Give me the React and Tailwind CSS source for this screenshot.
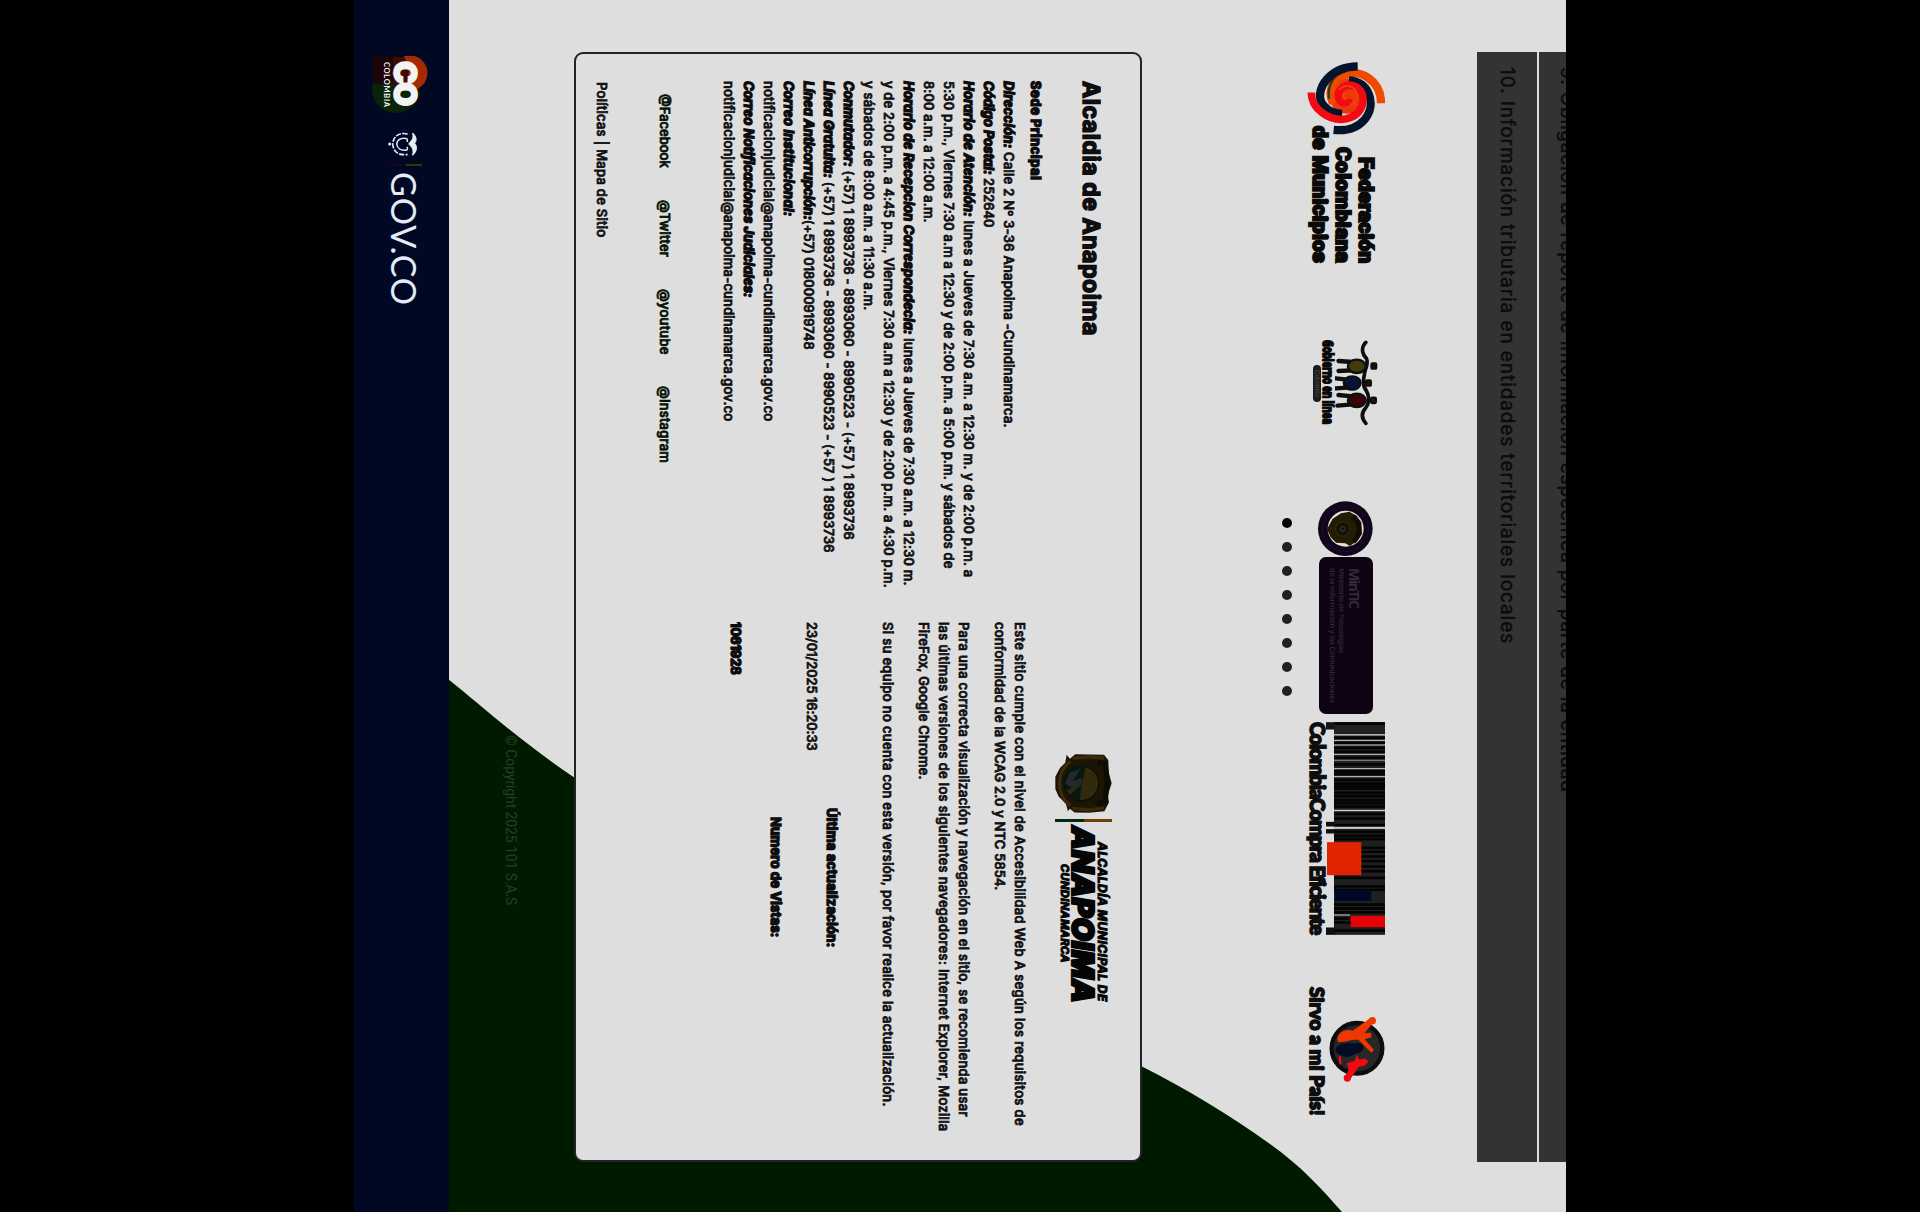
import React from "react";

function T({ className = "", children }) {
  return (
    <div className="flex">
      <span className={`whitespace-nowrap ${className}`}>{children}</span>
    </div>
  );
}

const B = ({ children }) => <b className="font-bold italic [-webkit-text-stroke:1.4px_#0c0c0f]">{children}</b>;

function Swirl() {
  return (
    <svg className="h-[78px] w-[73px]" viewBox="66 -316 219 237">
      <g transform="matrix(0 -1 1 0 0 0)" fill="none" strokeLinecap="butt">
        <circle cx="200" cy="168" r="54" fill="#ea3a0c" stroke="none" />
        <path d="M304 190 C304 120 240 84 190 104 C150 122 143 160 158 190" stroke="#f04a00" strokeWidth="25" />
        <path d="M196 94 C160 100 140 135 146 176" stroke="#2c3d14" strokeWidth="7" />
        <path d="M233 78 C150 78 103 145 123 188 C138 214 160 222 186 222" stroke="#04142a" strokeWidth="25" />
        <path d="M160 271 C245 280 290 215 266 160 C255 132 228 122 206 120" stroke="#04142a" strokeWidth="25" />
        <path d="M92 157 C92 210 150 245 195 238 C255 226 262 165 233 143 C200 122 165 150 176 176 C184 194 204 192 206 176" stroke="#f20a14" strokeWidth="23" />
        <path d="M196 158 C184 164 188 178 200 176" stroke="#f04a00" strokeWidth="6" />
        <path d="M176 150 C190 132 215 134 228 152 C236 170 228 190 212 196" stroke="#ee4a08" strokeWidth="4" />
      </g>
    </svg>
  );
}

function People() {
  return (
    <svg className="h-[43px] w-[86px]" viewBox="59 -266 258 128">
      <g transform="matrix(0 -1 1 0 0 0)" stroke="#0e0e0e" strokeLinecap="round" strokeLinejoin="round">
        <path d="M230 66 C212 85 222 105 232 115 C240 135 224 150 226 162 C220 185 222 200 232 212 C242 230 240 250 230 262 C215 278 218 295 230 309" fill="none" strokeWidth="11" />
        <path d="M190 125 L148 122 M190 150 L148 152 M175 178 L140 174 M175 202 L140 204 M190 228 L148 224 M190 252 L145 256" strokeWidth="13" />
        <ellipse cx="203" cy="138" rx="27" ry="20" fill="#443a08" strokeWidth="7" />
        <ellipse cx="189" cy="188" rx="25" ry="20" fill="#06123a" strokeWidth="7" />
        <ellipse cx="203" cy="240" rx="27" ry="20" fill="#380406" strokeWidth="7" />
        <rect x="247" y="129" width="14" height="16" rx="3" fill="#16121c" strokeWidth="7" />
        <rect x="231" y="180" width="14" height="16" rx="3" fill="#2a1408" strokeWidth="7" />
        <rect x="246" y="232" width="14" height="16" rx="3" fill="#2c1a0a" strokeWidth="7" />
      </g>
    </svg>
  );
}

const darkBars = [67, 110, 126, 140, 152, 170, 190, 210, 218, 236, 247, 254, 262, 275, 285, 297, 306, 316, 338, 352, 372, 392, 404, 414, 440, 452, 466, 480, 496, 510, 530, 556, 566, 610, 622, 634, 652, 664, 688];
const lightBars = [[103, 4], [120, 3], [134, 3], [162, 3], [180, 2], [205, 3], [229, 3], [330, 4], [381, 6]];

function Barcode() {
  return (
    <svg className="h-[59px] w-[213px]" viewBox="67 -345 638 177">
      <g transform="matrix(0 -1 1 0 0 0)">
        <rect x="192" y="67" width="153" height="638" fill="#202020" />
        {darkBars.map((y) => <rect key={y} x="192" y={y} width="153" height="8" fill="#040404" />)}
        {lightBars.map(([y, h]) => <rect key={y} x="192" y={y} width="153" height={h} fill="#cfcfcf" />)}
        <rect x="168" y="67" width="26" height="22" fill="#151515" />
        <rect x="168" y="366" width="26" height="14" fill="#101010" />
        <rect x="168" y="388" width="26" height="13" fill="#101010" />
        <rect x="168" y="683" width="26" height="22" fill="#101010" />
        <rect x="192" y="643" width="48" height="5" fill="#8a8a8a" />
        <rect x="171" y="427" width="103" height="99" fill="#e02400" />
        <rect x="195" y="570" width="109" height="33" fill="#000828" />
        <rect x="242" y="648" width="103" height="34" fill="#e60008" />
      </g>
    </svg>
  );
}

function ServeBadge() {
  return (
    <svg className="h-[56px] w-[66px]" viewBox="948 -347 198 168">
      <g transform="matrix(0 -1 1 0 0 0)" strokeLinecap="round">
        <circle cx="263" cy="1045" r="76" fill="#272727" stroke="#0b0c0e" strokeWidth="13" />
        <path d="M198 1050 C205 1025 235 1030 270 1030 C295 1040 280 1060 255 1062 C235 1078 205 1070 198 1050Z" fill="#000c24" />
        <path d="M205 1025 C200 1000 225 985 250 992 L302 955 L316 963 L285 1000 L305 998 L306 1012 L286 1018 L314 1050 L306 1058 L268 1020 C245 1015 225 1030 205 1025Z" fill="#ee3800" />
        <circle cx="309" cy="962" r="11" fill="#ee3800" />
        <path d="M232 1090 L256 1082 L262 1064 L270 1078 L290 1076 L297 1086 L284 1098 L268 1100 L240 1142 L226 1138 L238 1108Z" fill="#ee0a10" />
        <circle cx="234" cy="1134" r="11" fill="#ee0a10" />
        <path d="M211 1070 L213 1090" stroke="#ee0a10" strokeWidth="7" />
      </g>
    </svg>
  );
}

function MinTicSeal() {
  return (
    <svg className="h-[56px] w-[56px]" viewBox="61 -311 168 168">
      <g transform="matrix(0 -1 1 0 0 0)">
        <circle cx="228" cy="144" r="82" fill="#10051a" />
        <circle cx="228" cy="144" r="69" fill="none" stroke="#1d0c2b" strokeWidth="3" />
        <circle cx="229" cy="144" r="54" fill="#e4dfd6" />
        <path d="M173 145 L190 114 L215 98 L240 93 L262 105 L276 125 L278 160 L266 178 L242 196 L228 188 L200 186 L184 170Z" fill="#241a05" />
        <path d="M250 108 C275 125 275 165 252 184" fill="none" stroke="#0e0a06" strokeWidth="14" />
        <circle cx="220" cy="145" r="22" fill="#141308" stroke="#2c240c" strokeWidth="5" />
        <circle cx="220" cy="145" r="7" fill="none" stroke="#33301c" strokeWidth="4" />
      </g>
    </svg>
  );
}

function TownCrest() {
  return (
    <svg className="h-[57px] w-[60px]" viewBox="37 -219 180 172">
      <g transform="matrix(0 -1 1 0 0 0)">
        <path d="M108 40 L195 42 L208 58 L206 85 L218 128 L206 165 L210 185 L196 212 L150 217 L106 216 L92 205 L86 212 L80 190 L58 168 L48 145 L48 108 L62 82 L78 66 L82 42 L92 54Z" fill="#1d1504" />
        <path d="M100 52 L150 48 L195 52 M100 204 L150 208 L195 202" fill="none" stroke="#3a2a08" strokeWidth="10" />
        <path d="M94 62 C50 90 50 165 94 195" fill="none" stroke="#3e2d08" strokeWidth="9" />
        <path d="M175 66 L200 70 L204 125 L198 185 L175 192" fill="none" stroke="#0e0c06" strokeWidth="16" />
        <circle cx="127" cy="128" r="52" fill="#33290c" stroke="#0d0c0a" strokeWidth="4" />
        <path d="M127 76 A52 52 0 0 0 80 150 L128 130 L140 78Z" fill="#031a12" />
        <path d="M92 95 L125 84 L100 122 L128 112 L128 146 L96 140 L78 128Z" fill="#24282c" />
        <path d="M90 165 L128 130 L122 178Z" fill="#031a12" />
      </g>
    </svg>
  );
}

function CoLogo() {
  return (
    <div className="relative h-[57px] w-[57px]">
      <svg className="absolute inset-0 h-full w-full" viewBox="0 0 57 57">
        <circle cx="33" cy="32" r="24" fill="#0a2206" />
        <path d="M0 28 H28 V55 H0Z" fill="#1c0408" />
        <circle cx="17" cy="18" r="17.5" fill="#a32a02" />
        <path d="M1 24 A26 26 0 0 1 31 24 L31 35 H1Z" fill="#3a0d04" />
      </svg>
      <div className="relative pl-[5px] pt-[5px] text-[#f2f2f2]">
        <T className="font-['Inter'] text-[31px] font-black leading-[36px] tracking-[-2px] [-webkit-text-stroke:1.6px_#f2f2f2]">CO</T>
        <T className="-mt-[4px] pl-px font-['Lato'] text-[7.5px] font-bold leading-[10px] tracking-[0.7px]">COLOMBIA</T>
      </div>
    </div>
  );
}

function GovCrest() {
  return (
    <svg className="h-[31px] w-[24px]" viewBox="302 -206 72 93">
      <g transform="matrix(0 -1 1 0 0 0)" fill="none" stroke="#e0eaf6" strokeWidth="5">
        <path d="M190 305 C202 316 203 328 196 336 C204 344 204 360 190 372 C193 358 190 350 184 344 L178 338 L184 330 C190 325 193 318 190 305Z" fill="#e6eef8" stroke="#e6eef8" strokeWidth="3" />
        <path d="M175 308 C148 302 132 315 130 338 C132 362 148 374 175 369" strokeDasharray="16 4" />
        <path d="M174 322 C152 318 144 328 142 338 C144 350 152 360 174 356 M174 322 V332 M174 356 V346" strokeWidth="4.5" />
        <circle cx="121" cy="338" r="4.5" fill="#e6eef8" stroke="none" />
      </g>
    </svg>
  );
}

const body = "font-['Inter'] text-[13px] font-medium leading-[20px] text-[#111113] [-webkit-text-stroke:0.8px_#111113]";
const heavy = "font-bold [-webkit-text-stroke:1.4px_#0c0c0f]";
const tab = "font-['Inter'] text-[19px] leading-[26px] text-[#0b0b0b] [-webkit-text-stroke:0.5px_#0b0b0b]";

export default function App() {
  return (
    <div className="flex h-[1212px] w-[1920px] justify-center overflow-hidden bg-black">
      <div className="relative flex h-[1212px] w-[1212px] shrink-0 rotate-90 flex-col overflow-hidden bg-[#dedede]">
        <svg className="absolute inset-0 h-[1212px] w-[1212px]" viewBox="0 0 1212 1212">
          <path d="M679 1118 C706 1084 742 1045 778 991 L1066 425 C1088 381 1115 336 1144 296 C1166 265 1189 244 1212 224 V1118Z" fill="#001a00" />
        </svg>

        <div className="relative ml-[52px] w-[1110px]">
          <div className="flex h-[27px] items-start overflow-hidden bg-[#333333] pl-[15px]">
            <div className="-mt-[14px]"><T className={`tracking-[0.84px] ${tab}`}>9. Obligación de reporte de información específica por parte de la entidad</T></div>
          </div>
          <div className="mt-[2px] flex h-[60px] items-center bg-[#333333] pl-[15px]">
            <T className={`tracking-[0.92px] ${tab}`}>10. Información tributaria en entidades territoriales locales</T>
          </div>
        </div>

        <div className="relative mt-[92px] flex h-[84px] items-start pl-[62px]">
          <div className="flex w-[278px]">
            <Swirl />
            <div className="-ml-[9px] pt-[8px] font-['Roboto'] text-[21px] font-black leading-[23px] text-[#0a0a0a] [-webkit-text-stroke:2px_#0a0a0a]">
              <div className="pl-[31px]"><T className="tracking-[0.1px]">Federación</T></div>
              <div className="pl-[21px]"><T className="tracking-[0.3px]">Colombiana</T></div>
              <T className="tracking-[0.3px]">de Municipios</T>
            </div>
          </div>
          <div className="w-[161px] pt-[7px]">
            <People />
            <div className="-mt-[2px] w-[86px]"><T className="inline-block origin-left scale-x-[0.635] font-['Open_Sans'] text-[15px] font-bold leading-[16px] text-[#0a0a0a] [-webkit-text-stroke:2px_#0a0a0a]">Gobierno en línea</T></div>
            <div className="ml-[25px] h-[8px] w-[37px] rounded-sm bg-[#1b1b1b] text-center font-['Inter'] text-[6px] leading-[8px] text-[#4a4a4a]">Colombia</div>
          </div>
          <div className="flex w-[221px] pt-[12px]">
            <MinTicSeal />
            <div className="h-[54px] w-[157px] rounded-[7px] bg-[#0e0312] pl-[11px] pt-[11px] font-['Open_Sans'] text-[#33283a]">
              <T className="text-[14px] font-bold leading-[16px] tracking-[-1.5px]">MinTIC</T>
              <T className="text-[7.5px] font-semibold leading-[9px] tracking-[-0.28px]">Ministerio de Tecnologías</T>
              <T className="text-[7.5px] font-semibold leading-[9px] tracking-[-0.21px]">de la Información y las Comunicaciones</T>
            </div>
          </div>
          <div className="w-[265px]">
            <Barcode />
            <div className="-mt-[4px]"><T className="font-['Lato'] text-[20px] font-black leading-[24px] tracking-[-1.1px] text-[#0e0e0e] [-webkit-text-stroke:1.6px_#0e0e0e]">ColombiaCompra Eficiente</T></div>
          </div>
          <div className="w-[140px]">
            <div className="pl-[29px]"><ServeBadge /></div>
            <T className="font-['Lato'] text-[19px] font-bold leading-[24px] tracking-[0.1px] text-[#0e0e0e] [-webkit-text-stroke:1.9px_#0e0e0e]">Sirvo a mi País!</T>
          </div>
        </div>

        <div className="relative mt-[9px] flex h-[10px] gap-[14px] pl-[518px]">
          <i className="size-[10px] rounded-full bg-[#050505]" />
          {[1, 2, 3, 4, 5, 6, 7].map((i) => <i key={i} className="size-[10px] rounded-full bg-[#202020]" />)}
        </div>

        <div className="relative ml-[52px] mt-[140px] flex h-[568px] w-[1110px] rounded-[9px] border-2 border-[#222326] bg-[#dedede]">
          <div className={`w-[568px] shrink-0 pl-[27px] pt-[35px] ${body}`}>
            <T className="text-[23px] font-bold leading-[28px] tracking-[0.55px] [-webkit-text-stroke:1.5px_#0c0c0f]">Alcaldia de Anapoima</T>
            <div className="mt-[31px]"><T className={`tracking-[0.57px] ${heavy}`}>Sede Principal</T></div>
            <div className="mt-[7px]">
              <T className="tracking-[0.26px]"><B>Dirección:</B> Calle 2 Nº 3-36 Anapoima -Cundinamarca.</T>
              <T className="tracking-[0.05px]"><B>Código Postal:</B> 252640</T>
              <T className="tracking-[0.24px]"><B>Horario de Atención:</B> lunes a Jueves de 7:30 a.m. a 12:30 m. y de 2:00 p.m. a</T>
              <T className="tracking-[0.19px]">5:30 p.m., Viernes 7:30 a.m a 12:30 y de 2:00 p.m. a 5:00 p.m. y sábados de</T>
              <T className="tracking-[0.18px]">8:00 a.m. a 12:00 a.m.</T>
              <T className="tracking-[0.2px]"><B>Horario de Recepcion Correspondecia:</B> lunes a Jueves de 7:30 a.m. a 12:30 m.</T>
              <T className="tracking-[0.19px]">y de 2:00 p.m. a 4:45 p.m., Viernes 7:30 a.m a 12:30 y de 2:00 p.m. a 4:30 p.m.</T>
              <T className="tracking-[0.23px]">y sábados de 8:00 a.m. a 11:30 a.m.</T>
              <T className="tracking-[0.14px]"><B>Conmutador:</B> (+57) 1 8993736 - 8993060 - 8990523 - (+57 ) 1 8993736</T>
              <T className="tracking-[0.17px]"><B>Línea Gratuita:</B> (+57) 1 8993736 - 8993060 - 8990523 - (+57 ) 1 8993736</T>
              <T className="tracking-[0.03px]"><B>Línea Anticorrupción:</B>(+57) 018000919748</T>
              <T className="tracking-[0.24px]"><B>Correo Institucional:</B></T>
              <T className="tracking-[0.2px]">notificacionjudicial@anapoima-cundinamarca.gov.co</T>
              <T className="tracking-[0.12px]"><B>Correo Notificaciones Judiciales:</B></T>
              <T className="tracking-[0.2px]">notificacionjudicial@anapoima-cundinamarca.gov.co</T>
            </div>
            <div className="mt-[44px] flex pl-[13px] text-[#041204] [-webkit-text-stroke:0.8px_#041204]">
              <div className="w-[106px]"><T>@Facebook</T></div>
              <div className="w-[89px]"><T className="tracking-[0.25px]">@Twitter</T></div>
              <div className="w-[97px]"><T className="tracking-[0.25px]">@youtube</T></div>
              <T className="tracking-[0.2px]">@Instagram</T>
            </div>
            <div className="mt-[43px] pl-px"><T className="tracking-[0.28px]">Políticas | Mapa de Sitio</T></div>
          </div>

          <div className={`pt-[28px] ${body}`}>
            <div className="flex h-[57px] pl-[131px]">
              <TownCrest />
              <div className="ml-[6px] flex h-[57px] w-[3px] flex-col">
                <i className="h-[28px] bg-[#6e3e04]" />
                <i className="flex-1 bg-[#022a12]" />
              </div>
              <div className="ml-[4px] pt-[3px] italic text-[#050505]">
                <div className="pl-[16px]"><T className="text-[12px] font-bold leading-[14px] tracking-[0.48px] [-webkit-text-stroke:1.1px_#050505]">ALCALDÍA MUNICIPAL DE</T></div>
                <T className="text-[30px] font-black leading-[24px] tracking-[0.25px] [-webkit-text-stroke:2.2px_#050505]">ANAPOIMA</T>
                <div className="pl-[38px]"><T className="text-[11px] font-bold leading-[13px] tracking-[0.42px] [-webkit-text-stroke:1.1px_#050505]">CUNDINAMARCA</T></div>
              </div>
            </div>
            <div className="mt-[25px]">
              <T className="tracking-[0.36px]">Este sitio cumple con el nivel de Accesibilidad Web A según los requisitos de</T>
              <T className="tracking-[0.18px]">conformidad de la WCAG 2.0 y NTC 5854.</T>
            </div>
            <div className="mt-[16px]">
              <T className="tracking-[0.29px]">Para una correcta visualización y navegación en el sitio, se recomienda usar</T>
              <T className="tracking-[0.33px]">las últimas versiones de los siguientes navegadores: Internet Explorer, Mozilla</T>
              <T className="tracking-[0.17px]">FireFox, Google Chrome.</T>
            </div>
            <div className="mt-[16px]"><T className="tracking-[0.33px]">Si su equipo no cuenta con esta versión, por favor realice la actualización.</T></div>
            <div className="mt-[36px] pl-[186px]"><T className={`tracking-[0.29px] ${heavy}`}>Última actualización:</T></div>
            <T className="tracking-[-0.05px]">23/01/2025 16:20:33</T>
            <div className="mt-[16px] pl-[195px]"><T className={`tracking-[0.18px] ${heavy}`}>Numero de Vistas:</T></div>
            <div className="mt-[20px]"><T className={`tracking-[-0.14px] ${heavy}`}>1061928</T></div>
          </div>
        </div>

        <div className="relative flex-1 pl-[735px] pt-[51px]">
          <T className="font-['Roboto'] text-[14px] leading-[24px] tracking-[-0.1px] text-[#263d26]">© Copyright 2025 101 S.A.S</T>
        </div>

        <div className="relative flex h-[95px] shrink-0 items-start bg-[#000824] pl-[56px] pt-[21px]">
          <CoLogo />
          <div className="ml-[19px] mt-[10px]"><GovCrest /></div>
          <div className="ml-[8px] mt-[6px] flex h-[35px] w-[2px] flex-col">
            <i className="h-[16px] bg-[#343406]" />
            <i className="flex-1 bg-[#180618]" />
          </div>
          <div className="ml-[6px] mt-[4px]"><T className="font-['Lato'] text-[34px] leading-[40px] tracking-[0.9px] text-[#e4ebf6]">GOV.CO</T></div>
        </div>
      </div>
    </div>
  );
}
